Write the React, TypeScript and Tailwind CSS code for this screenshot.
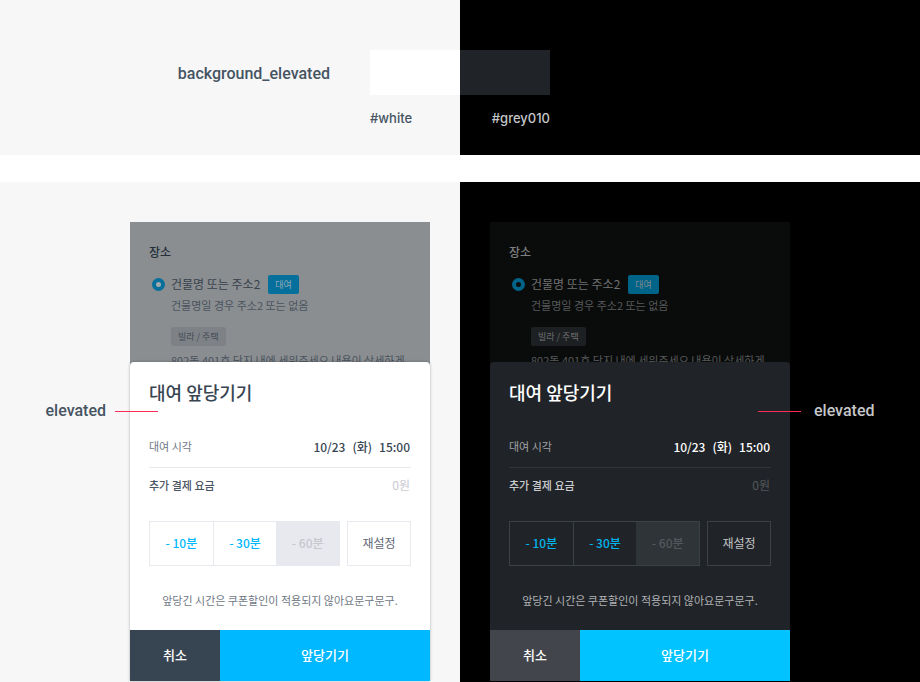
import { useId } from "react";

type Theme = {
  backdrop: string;
  place: string;
  address: string;
  detail: string;
  radio: string;
  tag: string;
  chip: string;
  sheet: string;
  title: string;
  label: string;
  value: string;
  fee: string;
  zero: string;
  rule: string;
  box: string;
  step: string;
  disabled: string;
  reset: string;
  note: string;
  cancel: string;
  confirm: string;
};

const light: Theme = {
  backdrop: "bg-[#8a8e91]",
  place: "text-[#252e39]",
  address: "text-[#38414c]",
  detail: "text-[#4b535e]",
  radio: "border-[#066f9c] bg-[#a5a9ac]",
  tag: "bg-[#066f9c] text-[#8fa9b5]",
  chip: "bg-[#7e8286] text-[#444b55]",
  sheet: "bg-white shadow-[0_0_3px_rgba(0,0,0,0.3)]",
  title: "text-[#374553]",
  label: "text-[#6f7884]",
  value: "text-[#374553]",
  fee: "text-[#4b5663]",
  zero: "text-[#c9cbd1]",
  rule: "border-[#e8e9ee]",
  box: "border-[#e8e9ee]",
  step: "text-[#00b8ff]",
  disabled: "bg-[#e8e9ee] text-[#c5c7cd]",
  reset: "text-[#5f6874]",
  note: "text-[#6f7884]",
  cancel: "bg-[#374553]",
  confirm: "bg-[#00b8ff]",
};

const dark: Theme = {
  backdrop: "bg-[#0a0c0b]",
  place: "text-[#7d7f80]",
  address: "text-[#6f7172]",
  detail: "text-[#57595b]",
  radio: "border-[#006388]",
  tag: "bg-[#006388] text-[#7f8a90]",
  chip: "bg-[#1d2023] text-[#6f7172]",
  sheet: "bg-[#202428]",
  title: "text-white",
  label: "text-[#a0a2a5]",
  value: "text-white",
  fee: "text-[#c9cbce]",
  zero: "text-[#54585c]",
  rule: "border-[#303538]",
  box: "border-[#3c4145]",
  step: "text-[#00b4ec]",
  disabled: "bg-[#2e3437] text-[#54595d]",
  reset: "text-[#c0c2c5]",
  note: "text-[#b0b2b5]",
  cancel: "bg-[#42454c]",
  confirm: "bg-[#00c3ff]",
};

function Screen({ theme: t }: { theme: Theme }) {
  const id = useId();
  return (
    <div
      className={`flex w-[300px] shrink-0 flex-col font-['Noto_Sans_CJK_KR',sans-serif] ${t.backdrop}`}
    >
      <div className="h-[140px] overflow-hidden pt-5 pl-[19px]">
        <h2 className={`text-[12px] leading-5 font-medium ${t.place}`}>장소</h2>
        <div className="mt-3 flex h-5 items-center pl-[3px]">
          <input
            id={id}
            type="radio"
            defaultChecked
            className={`size-[13px] shrink-0 appearance-none rounded-full border-4 ${t.radio}`}
          />
          <label htmlFor={id} className={`ml-1.5 text-[12px] leading-5 ${t.address}`}>
            건물명 또는 주소2
          </label>
          <span className={`ml-2 rounded-xs px-[7px] text-[9px] leading-[19px] ${t.tag}`}>
            대여
          </span>
        </div>
        <div className="pl-[22px]">
          <p className={`mt-px text-[11px] leading-5 ${t.detail}`}>건물명일 경우 주소2 또는 없음</p>
          <div className="mt-3 flex">
            <span className={`rounded-xs px-[7px] text-[9px] leading-[19px] ${t.chip}`}>
              빌라 / 주택
            </span>
          </div>
          <p className={`mt-1 text-[11px] leading-5 whitespace-nowrap ${t.detail}`}>
            802동 401호 단지 내에 세워주세요 내용이 상세하게
          </p>
        </div>
      </div>

      <section className={`rounded-t-[4px] ${t.sheet}`}>
        <div className="px-[19px] pt-3.5">
          <h3 className={`text-[18px] leading-8 font-medium ${t.title}`}>대여 앞당기기</h3>
          <dl className="mt-[18px]">
            <div className={`flex h-[42px] items-center justify-between border-b pr-px ${t.rule}`}>
              <dt className={`text-[11px] ${t.label}`}>대여 시각</dt>
              <dd className={`flex gap-[7px] text-[12px] font-medium ${t.value}`}>
                <span>10/23</span>
                <span>(화)</span>
                <span>15:00</span>
              </dd>
            </div>
            <div className="flex h-[34px] items-center justify-between pr-px">
              <dt className={`text-[11px] font-medium ${t.fee}`}>추가 결제 요금</dt>
              <dd className={`text-[12px] ${t.zero}`}>0원</dd>
            </div>
          </dl>
          <div className="mt-[19px] flex h-[45px] gap-[7px] text-[12px] leading-4">
            <div className={`flex flex-1 border font-medium ${t.box}`}>
              <button type="button" className={`flex-1 border-r pb-0.5 ${t.box} ${t.step}`}>
                - 10분
              </button>
              <button type="button" className={`flex-1 pb-0.5 ${t.step}`}>
                - 30분
              </button>
              <button type="button" disabled className={`flex-1 pb-0.5 ${t.disabled}`}>
                - 60분
              </button>
            </div>
            <button type="button" className={`w-16 border pb-0.5 ${t.box} ${t.reset}`}>
              재설정
            </button>
          </div>
          <p className={`mt-6 text-center text-[11px] leading-5 whitespace-nowrap ${t.note}`}>
            앞당긴 시간은 쿠폰할인이 적용되지 않아요문구문구.
          </p>
        </div>
        <div className="mt-5 flex h-[51px] text-[13px] font-medium text-white">
          <button type="button" className={`flex-3 pb-0.5 ${t.cancel}`}>
            취소
          </button>
          <button type="button" className={`flex-7 pb-0.5 ${t.confirm}`}>
            앞당기기
          </button>
        </div>
      </section>
    </div>
  );
}

export default function App() {
  return (
    <main className="bg-white font-['Inter','Noto_Sans_CJK_KR',sans-serif]">
      <section className="grid h-[155px] grid-cols-2">
        <div className="flex justify-end gap-10 bg-[#f7f7f7] pt-[50px]">
          <h1 className="font-['Roboto',sans-serif] text-[16px] leading-[47px] font-medium text-[#455362]">
            background_elevated
          </h1>
          <div className="w-[90px]">
            <div className="h-[45px] bg-white" />
            <p className="mt-[13px] text-[13px] leading-5 font-medium text-[#455362]">#white</p>
          </div>
        </div>
        <div className="bg-black pt-[50px]">
          <div className="w-[90px]">
            <div className="h-[45px] bg-[#202428]" />
            <p className="mt-[13px] text-right text-[13px] leading-5 font-medium text-[#c5c6c9]">
              #grey010
            </p>
          </div>
        </div>
      </section>

      <section className="mt-[27px] grid grid-cols-2">
        <div className="flex justify-end gap-6 bg-[#f7f7f7] pt-10 pr-[30px] pb-px">
          <p className="pt-[179px] font-['Roboto',sans-serif] text-[16px] leading-5 font-medium text-[#455362]">
            elevated
          </p>
          <div className="relative">
            <Screen theme={light} />
            <div className="absolute top-[189px] -left-[15px] h-px w-[43px] bg-[#ff2d55]" />
          </div>
        </div>
        <div className="flex gap-6 bg-black pt-10 pb-px pl-[30px]">
          <div className="relative">
            <Screen theme={dark} />
            <div className="absolute top-[189px] -right-[11px] h-px w-[43px] bg-[#ff2d55]" />
          </div>
          <p className="pt-[179px] font-['Roboto',sans-serif] text-[16px] leading-5 font-medium text-[#c5c6c9]">
            elevated
          </p>
        </div>
      </section>
    </main>
  );
}
